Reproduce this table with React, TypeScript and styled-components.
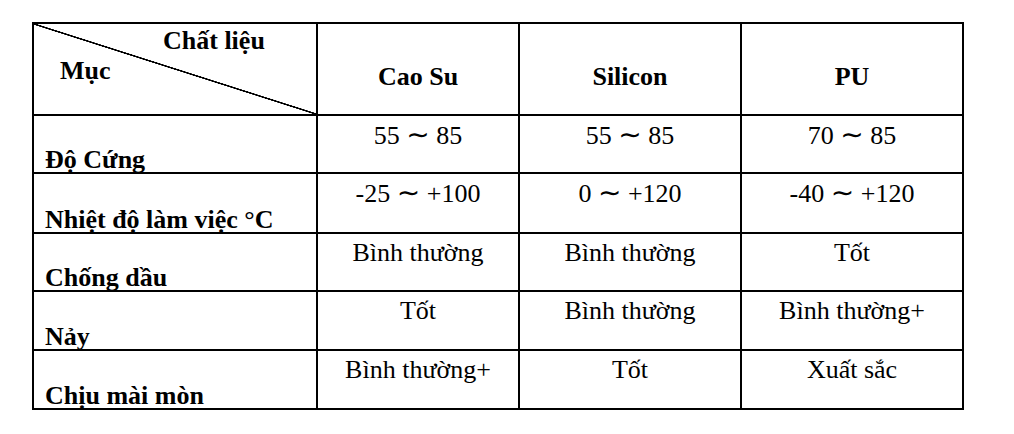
import React from "react";
import styled, { createGlobalStyle } from "styled-components";

const GlobalStyle = createGlobalStyle`
  html, body {
    margin: 0;
    padding: 0;
    background: #ffffff;
  }
  body {
    font-family: "Liberation Serif", "Tinos", "Times New Roman", serif;
    color: #000;
  }
`;

const Page = styled.div`
  padding: 22px 0 0 32px;
`;

const Grid = styled.div`
  display: inline-grid;
  grid-template-columns: 282px 200px 220px 220px;
  grid-template-rows: 90px 56px 58px 56px 57px 57px;
  gap: 2px;
  padding: 2px;
  background: #000;
`;

const Cell = styled.div`
  background: #fff;
  font-family: "Liberation Serif", "Tinos", "Times New Roman", serif;
  font-size: 26px;
  line-height: 30px;
  white-space: nowrap;
`;

// o góc trên trái có đường chéo
const CornerCell = styled(Cell)`
  display: flex;
  flex-direction: column;
  font-weight: bold;
  background: linear-gradient(
    to top right,
    #fff calc(50% - 1px),
    #000 calc(50% - 0.6px),
    #000 calc(50% + 0.6px),
    #fff calc(50% + 1px)
  );
`;

const CornerTop = styled.span`
  margin-top: 2px;
  padding-left: 129px;
`;

const CornerBottom = styled.span`
  padding-left: 26px;
`;

const HeadCell = styled(Cell)`
  font-weight: bold;
  text-align: center;
  padding-top: 38px;
`;

const LabelCell = styled(Cell)`
  display: flex;
  align-items: flex-end;
  font-weight: bold;
  padding-left: 11px;
  overflow: visible;
`;

const LabelText = styled.span`
  margin-bottom: -3px;
`;

const ValueCell = styled(Cell)`
  text-align: center;
  padding-top: 4px;
`;

const Wave = styled.span`
  font-family: "DejaVu Sans", sans-serif;
  font-size: 28px;
`;

const materials = ["Cao Su", "Silicon", "PU"];

const rows: { label: string; values: [string, string][] }[] = [
  { label: "Độ Cứng", values: [["55", "85"], ["55", "85"], ["70", "85"]] },
  { label: "Nhiệt độ làm việc °C", values: [["-25", "+100"], ["0", "+120"], ["-40", "+120"]] },
  { label: "Chống dầu", values: [["Bình thường", ""], ["Bình thường", ""], ["Tốt", ""]] },
  { label: "Nảy", values: [["Tốt", ""], ["Bình thường", ""], ["Bình thường+", ""]] },
  { label: "Chịu mài mòn", values: [["Bình thường+", ""], ["Tốt", ""], ["Xuất sắc", ""]] },
];

export default function App() {
  return (
    <Page>
      <GlobalStyle />
      <Grid>
        <CornerCell>
          <CornerTop>Chất liệu</CornerTop>
          <CornerBottom>Mục</CornerBottom>
        </CornerCell>
        {materials.map((m) => (
          <HeadCell key={m}>{m}</HeadCell>
        ))}
        {rows.map((r) => (
          <React.Fragment key={r.label}>
            <LabelCell>
              <LabelText>{r.label}</LabelText>
            </LabelCell>
            {r.values.map(([from, to], i) => (
              <ValueCell key={i}>
                {to ? (
                  <>
                    {from} <Wave>∼</Wave> {to}
                  </>
                ) : (
                  from
                )}
              </ValueCell>
            ))}
          </React.Fragment>
        ))}
      </Grid>
    </Page>
  );
}
